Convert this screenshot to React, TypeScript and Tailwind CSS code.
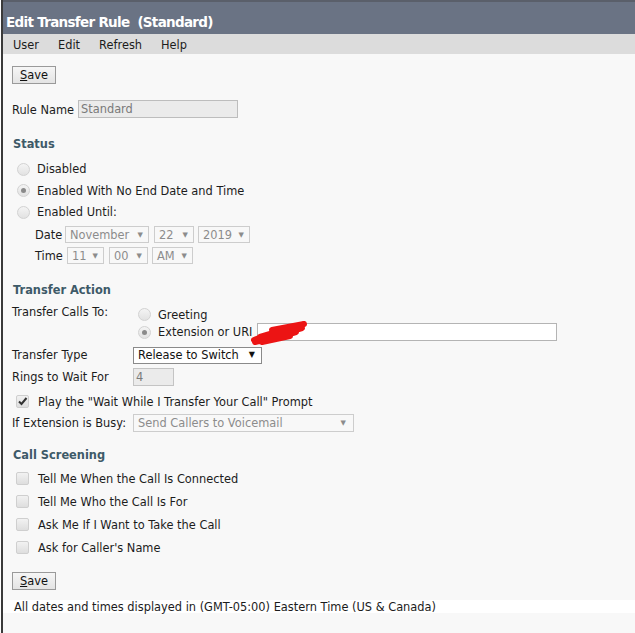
const Radio = ({ checked = false }: { checked?: boolean }) => (
  <span className="flex h-[13px] w-[13px] shrink-0 items-center justify-center rounded-full border border-[#d2d2d2] bg-gradient-to-b from-[#f4f4f4] to-[#e2e2e2]">
    {checked && <span className="h-[5px] w-[5px] rounded-full bg-[#8a8a8a]" />}
  </span>
);

const Check = ({ checked = false }: { checked?: boolean }) => (
  <span className="flex h-[13px] w-[13px] shrink-0 items-center justify-center rounded-[2px] border border-[#cfcfcf] bg-gradient-to-b from-[#f2f2f2] to-[#dedede]">
    {checked && (
      <svg width="11" height="11" viewBox="0 0 11 11">
        <path d="M2 5.5 L4.5 8 L9.5 2" fill="none" stroke="#333" strokeWidth="2" />
      </svg>
    )}
  </span>
);

const Select = ({
  value,
  className,
  active = false,
}: {
  value: string;
  className: string;
  active?: boolean;
}) => (
  <span
    className={
      active
        ? `flex items-center justify-between border border-[#8a8a8a] bg-white pl-[4px] pr-[6px] text-[#111] ${className}`
        : `flex items-center justify-between border border-[#cdcdcd] bg-[#f8f8f8] pl-[4px] pr-[5px] text-[#8c8c8c] ${className}`
    }>
    <span>{value}</span>
    <span className={active ? 'text-[8px] text-[#111]' : 'text-[7px] text-[#8c8c8c]'}>▼</span>
  </span>
);

const Heading = ({ children, className }: { children: string; className: string }) => (
  <div className={`h-[14px] font-bold leading-[14px] text-[#3e5a68] ${className}`}>{children}</div>
);

const SaveButton = ({ className }: { className: string }) => (
  <button
    type="button"
    className={`flex h-[18px] w-[44px] items-center justify-center border border-[#9a9a9a] bg-gradient-to-b from-[#f6f6f6] to-[#e4e4e4] text-[11.4px] text-[#111] ${className}`}>
    <span>
      <span className="underline">S</span>ave
    </span>
  </button>
);

const App = () => (
  <div className="ml-px min-h-[633px] border-l-2 border-[#3a3a3a] bg-[#f8f8f8] font-['DejaVu_Sans',sans-serif] text-[11.4px] leading-[14px] text-[#1c1c1c]">
    <div className="flex h-[34px] items-center border-t-2 border-[#5a5f6a] bg-[#6a7384] pl-[3px] pt-[7px] text-[13.5px] font-bold tracking-[-0.7px] text-white">
      Edit Transfer Rule&nbsp;&nbsp;(Standard)
    </div>
    <div className="flex h-[20px] items-center gap-[19px] bg-[#dcdcdc] pl-[10px] pt-px">
      <span>User</span>
      <span>Edit</span>
      <span>Refresh</span>
      <span>Help</span>
    </div>

    <div className="flex flex-col pl-[9px]">
      <SaveButton className="mt-[12px]" />

      <div className="mt-[16px] flex h-[18px] items-center">
        <span className="w-[66px] pt-px">Rule Name</span>
        <span className="flex h-[18px] w-[160px] items-center border border-[#bdbdbd] bg-[#ebebeb] px-[2px] text-[#7a7a7a]">
          Standard
        </span>
      </div>

      <Heading className="mt-[19px] pl-px">Status</Heading>

      <div className="mt-[7px] flex flex-col pl-[5px]">
        <div className="flex h-[22px] items-center gap-[7px]">
          <Radio />
          <span>Disabled</span>
        </div>
        <div className="flex h-[21px] items-center gap-[7px]">
          <Radio checked />
          <span>Enabled With No End Date and Time</span>
        </div>
        <div className="flex h-[22px] items-center gap-[7px]">
          <Radio />
          <span>Enabled Until:</span>
        </div>
      </div>

      <div className="mt-[3px] flex flex-col gap-[4px] pl-[23px]">
        <div className="flex h-[17px] items-center">
          <span className="w-[30px]">Date</span>
          <Select value="November" className="h-[17px] w-[84px]" />
          <Select value="22" className="ml-[5px] h-[17px] w-[40px]" />
          <Select value="2019" className="ml-[4px] h-[17px] w-[52px]" />
        </div>
        <div className="flex h-[17px] items-center">
          <span className="w-[32px]">Time</span>
          <Select value="11" className="h-[17px] w-[37px]" />
          <Select value="00" className="ml-[5px] h-[17px] w-[39px]" />
          <Select value="AM" className="ml-[4px] h-[17px] w-[41px]" />
        </div>
      </div>

      <Heading className="mt-[19px] pl-px">Transfer Action</Heading>

      <div className="mt-[7px] flex">
        <span className="w-[121px] pt-px">Transfer Calls To:</span>
        <div className="flex flex-col pl-[5px]">
          <div className="flex h-[18px] items-center gap-[7px] pt-[3px]">
            <Radio />
            <span>Greeting</span>
          </div>
          <div className="flex h-[20px] items-center">
            <Radio checked />
            <span className="ml-[7px]">Extension or URI</span>
            <span className="relative ml-[5px] h-[18px] w-[300px] border border-[#b4b4b4] bg-white">
              <svg
                className="absolute -left-[8px] -top-[3px]"
                width="58"
                height="24"
                viewBox="0 0 58 24">
                <path
                  d="M4 19 L38 7 L22 9 L54 3 L10 16 L52 7 L5 21 L46 11 L12 21 L40 15"
                  fill="none"
                  stroke="#ec1414"
                  strokeWidth="6"
                  strokeLinecap="round"
                  strokeLinejoin="round"
                />
              </svg>
            </span>
          </div>
        </div>
      </div>

      <div className="mt-[5px] flex h-[16px] items-center">
        <span className="w-[121px]">Transfer Type</span>
        <Select value="Release to Switch" className="h-[17px] w-[129px]" active />
      </div>

      <div className="mt-[5px] flex h-[18px] items-center">
        <span className="w-[121px]">Rings to Wait For</span>
        <span className="flex h-[18px] w-[41px] items-center border border-[#c4c4c4] bg-[#ebebeb] px-[2px] text-[#7a7a7a]">
          4
        </span>
      </div>

      <div className="mt-[7px] flex h-[16px] items-center gap-[9px] pl-[4px]">
        <Check checked />
        <span className="pt-[2px]">Play the "Wait While I Transfer Your Call" Prompt</span>
      </div>

      <div className="mt-[5px] flex h-[17px] items-center">
        <span className="w-[121px]">If Extension is Busy:</span>
        <Select value="Send Callers to Voicemail" className="h-[18px] w-[221px] pr-[7px]" />
      </div>

      <Heading className="mt-[17px] pl-px">Call Screening</Heading>

      <div className="mt-[5px] flex flex-col pl-[4px]">
        {[
          'Tell Me When the Call Is Connected',
          'Tell Me Who the Call Is For',
          'Ask Me If I Want to Take the Call',
          "Ask for Caller's Name",
        ].map((label) => (
          <div key={label} className="flex h-[23px] items-center gap-[9px]">
            <Check />
            <span className="pt-px">{label}</span>
          </div>
        ))}
      </div>

      <SaveButton className="mt-[13px]" />
    </div>

    <div className="mt-[10px] flex h-[13px] items-center bg-white pl-[11px]">
      All dates and times displayed in (GMT-05:00) Eastern Time (US &amp; Canada)
    </div>
  </div>
);

export default App;
